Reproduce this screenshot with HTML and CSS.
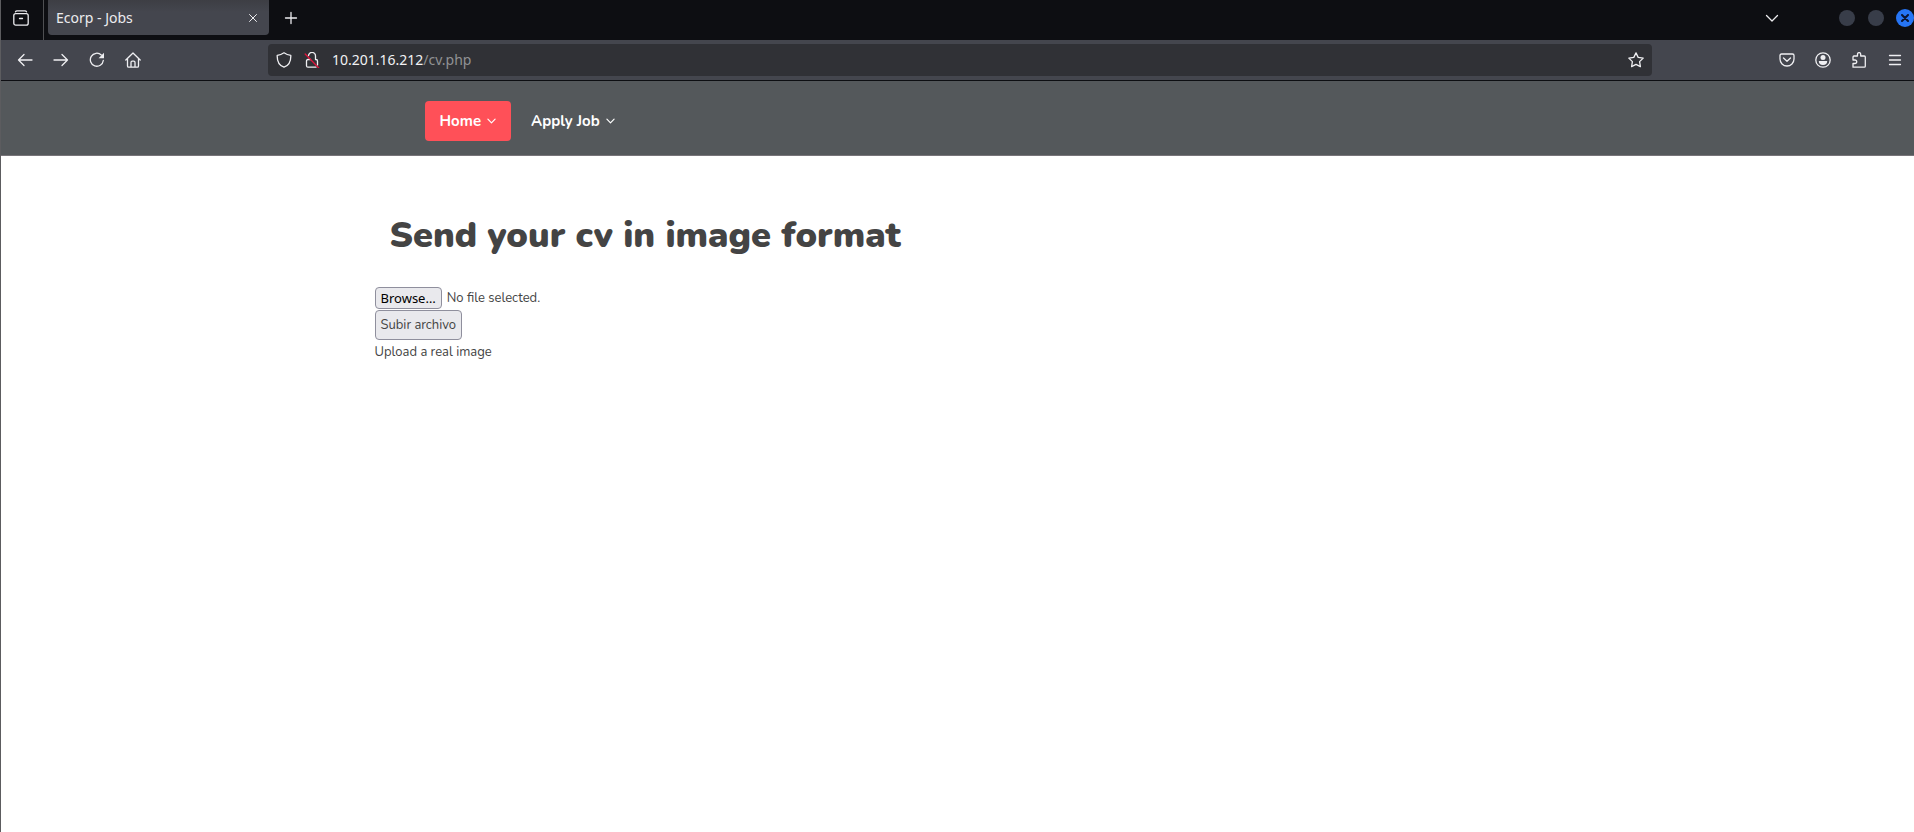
FILE: index.html
```html
<!DOCTYPE html>
<html lang="en">
<head>
<meta charset="utf-8">
<title>Ecorp - Jobs</title>
<link rel="stylesheet" href="styles.css">
</head>
<body>
<div class="window">
  <div class="tabstrip">
    <button class="icon-btn view-btn" aria-label="Recent browsing"><svg class="icon" viewBox="0 0 16 16"><path d="M4 .8h8M2.500 1.800Q3 .8 4 .8M13.500 1.800Q13 .8 12 .8"/><rect x=".8" y="3.600" width="14.4" height="11.600" rx="2"/><path d="M6.500 8.500h3"/></svg></button>
    <div class="tab">
      <span class="tab-title">Ecorp - Jobs</span>
      <button class="icon-btn tab-close" aria-label="Close tab"><svg class="icon-small" viewBox="0 0 10 10"><path d="M1.500 1.500l7 7M8.500 1.500l-7 7"/></svg></button>
    </div>
    <button class="icon-btn new-tab" aria-label="New tab"><svg class="icon" viewBox="0 0 16 16"><path d="M8 2.500v11M2.500 8h11"/></svg></button>
    <button class="icon-btn list-tabs" aria-label="List all tabs"><svg class="icon" viewBox="0 0 16 16"><path d="M2.500 5.500L8 11l5.500-5.500"/></svg></button>
    <button class="win-btn" aria-label="Minimize"></button>
    <button class="win-btn" aria-label="Maximize"></button>
    <button class="win-btn win-close" aria-label="Close"><svg viewBox="0 0 8 8"><path d="M1 1l6 6M7 1L1 7"/></svg></button>
  </div>
  <div class="toolbar">
    <div class="nav-buttons">
      <button class="icon-btn" aria-label="Back"><svg class="icon" viewBox="0 0 16 16"><path d="M15 8H1.500M7 2.500L1.500 8 7 13.500"/></svg></button>
      <button class="icon-btn" aria-label="Forward"><svg class="icon" viewBox="0 0 16 16"><path d="M1 8h13.500M9 2.500L14.500 8 9 13.500"/></svg></button>
      <button class="icon-btn" aria-label="Reload"><svg class="icon" viewBox="0 0 16 16"><path d="M14.300 8.500A6.500 6.500 0 1 1 12.300 3"/><path class="solid" d="M15 .8v5.400H9.600z"/></svg></button>
      <button class="icon-btn" aria-label="Home"><svg class="icon" viewBox="0 0 16 16"><path d="M.8 8L8 1l7.200 7M2.500 6.800V14q0 1.200 1.200 1.200h8.600q1.200 0 1.200-1.200V6.800M6 15v-4.500Q6 9.200 7.200 9.200h1.600q1.200 0 1.200 1.300V15"/></svg></button>
    </div>
    <div class="urlbar">
      <svg class="icon" viewBox="0 0 16 16"><path d="M8 .8Q11 3 14.800 3.400C15 9 13 13.500 8 15.200 3 13.500 1 9 1.200 3.400 5 3 8 .8 8 .8z"/></svg>
      <svg class="icon" viewBox="0 0 16 16"><path d="M4.500 3.600a3.500 3.500 0 0 1 7 .7V7.500h.5q1.500 0 1.500 1.500v4M6.500 7.500H4q-1.500 0-1.500 1.500v4.700q0 1.500 1.500 1.500h8"/><path class="slash" d="M1.200 2l13.600 14"/></svg>
      <div class="url"><span class="host">10.201.16.212</span>/cv.php</div>
      <button class="icon-btn" aria-label="Bookmark this page"><svg class="icon" viewBox="0 0 16 16"><path d="M8 .9l2.200 4.500 5 .7-3.600 3.500.8 5L8 12.300l-4.400 2.300.8-5L.8 6.100l5-.7z"/></svg></button>
    </div>
    <div class="tool-buttons">
      <button class="icon-btn" aria-label="Save to Pocket"><svg class="icon" viewBox="0 0 16 16"><path d="M2.500 2h11q1.500 0 1.500 1.500V7A7 7 0 0 1 1 7V3.500Q1 2 2.500 2zM4.500 6L8 9.300 11.500 6"/></svg></button>
      <button class="icon-btn" aria-label="Account"><svg class="icon" viewBox="0 0 16 16"><circle cx="8" cy="8" r="7.200"/><circle class="solid" cx="8" cy="5.500" r="2.500"/><path class="solid" d="M3.800 9h8.400q0 4-4.200 4t-4.200-4z"/></svg></button>
      <button class="icon-btn" aria-label="Extensions"><svg class="icon" viewBox="0 0 16 16"><path d="M2 15.200V11.500h2a1.700 1.700 0 0 0 0-3.500H2V5.500Q2 4 3 4h3.500V2.200a1.600 1.600 0 0 1 3.200 0V4h3.600q1 0 1 1v9.200q0 1-1 1z"/></svg></button>
      <button class="icon-btn" aria-label="Menu"><svg class="icon" viewBox="0 0 16 16"><path d="M2.500 3.500h11M2.500 8h11M2.500 12.500h11"/></svg></button>
    </div>
  </div>
  <header class="site-header">
    <nav class="container site-nav">
      <a class="nav-link active" href="#">Home<svg class="caret" viewBox="0 0 10 6"><path d="M1 1l4 4 4-4"/></svg></a>
      <a class="nav-link" href="#">Apply Job<svg class="caret" viewBox="0 0 10 6"><path d="M1 1l4 4 4-4"/></svg></a>
    </nav>
  </header>
  <main class="container content">
    <h1 class="title">Send your cv in image format</h1>
    <form class="upload">
      <div class="file-row">
        <input class="file-input" type="file" id="cv" accept="image/*">
        <label class="browse" for="cv">Browse…</label>
        <span>No file selected.</span>
      </div>
      <button class="submit" type="button">Subir archivo</button>
      <p class="message">Upload a real image</p>
    </form>
  </main>
</div>
</body>
</html>
```
FILE: styles.css
```css
* { box-sizing: border-box; }
body { margin: 0; background: #fff; color: #444; font: 13px/20px "Nunito", "Noto Sans", sans-serif; }
button { font: inherit; color: inherit; }
svg { display: block; fill: none; stroke: currentColor; stroke-width: 1.3; stroke-linecap: round; stroke-linejoin: round; }
.window { min-height: 100vh; border-left: 1px solid #5c5c5f; }
.icon { width: 16px; height: 16px; flex: none; }
.icon-small { width: 10px; height: 10px; stroke-width: 1; }
.solid { fill: currentColor; stroke: none; }
.slash { stroke: #e2143c; }
.icon-btn { display: grid; place-items: center; width: 16px; height: 16px; padding: 0; border: 0; background: none; flex: none; }

.tabstrip { display: flex; align-items: center; height: 40px; padding-bottom: 5px; background: #0d0e12; color: #ececef; }
.view-btn { width: 43px; height: 40px; border-right: 1px solid #4e4f52; margin-bottom: -5px; padding: 0 2px 5px 0; }
.tab { display: flex; align-items: center; justify-content: space-between; width: 221px; height: 35px; margin-left: 4px; padding: 0 8px; border-radius: 0 0 4px 4px; background: linear-gradient(#3d3e44, #44464e 12px); }
.tab-title { font: 14px/20px "Noto Sans", sans-serif; }
.new-tab { margin-left: 14px; }
.list-tabs { margin-left: auto; margin-right: 59px; }
.win-btn { display: grid; place-items: center; width: 16px; height: 16px; margin-right: 13px; padding: 0; border: 0; border-radius: 50%; background: #383d49; flex: none; }
.win-close { width: 18px; height: 18px; margin-right: 0; margin-left: -1px; background: #2675f5; color: #0b1430; }
.win-close svg { width: 8px; height: 8px; stroke-width: 2; }

.toolbar { display: flex; align-items: center; justify-content: space-between; height: 41px; padding: 0 11px 0 16px; border-bottom: 1px solid #0d0e12; background: #44464e; color: #efeff2; }
.nav-buttons { display: flex; gap: 20px; }
.tool-buttons { display: flex; gap: 20px; }
.urlbar { display: flex; align-items: center; width: 1384px; height: 32px; margin-right: auto; margin-left: 127px; padding: 0 8px; gap: 12px; border-radius: 4px; background: #303136; flex: 0 1 auto; }
.url { flex: 1; color: #919194; font: 14px/20px "Noto Sans", sans-serif; }
.host { color: #f2f2f4; }

.container { max-width: 1166px; margin: 0 auto; }
.site-header { padding: 20px 0 14px; border-bottom: 1px solid #777479; background: #54585b; }
.site-nav { display: flex; gap: 5px; padding-left: 50px; }
.nav-link { display: flex; align-items: center; gap: 6px; height: 40px; padding: 0 15px; border-radius: 4px; color: #fff; font-size: 15px; font-weight: 700; text-decoration: none; }
.active { background: #ff5058; }
.caret { width: 9px; height: 6px; }

.content { padding-top: 56px; }
.title { margin: 0 0 26px; padding-left: 15px; font: 900 36px/48px "Nunito", "Open Sans", sans-serif; }
.file-row { display: flex; align-items: center; gap: 5px; height: 24px; }
.file-input { position: absolute; width: 1px; height: 1px; opacity: 0; }
.browse, .submit { padding: 0 5px; border: 1px solid #8f8f9d; border-radius: 4px; background: #e9e9ed; }
.browse { color: #000; font-family: "Noto Sans", sans-serif; }
.submit { display: block; height: 30px; }
.message { margin: 2px 0 0; }
```
